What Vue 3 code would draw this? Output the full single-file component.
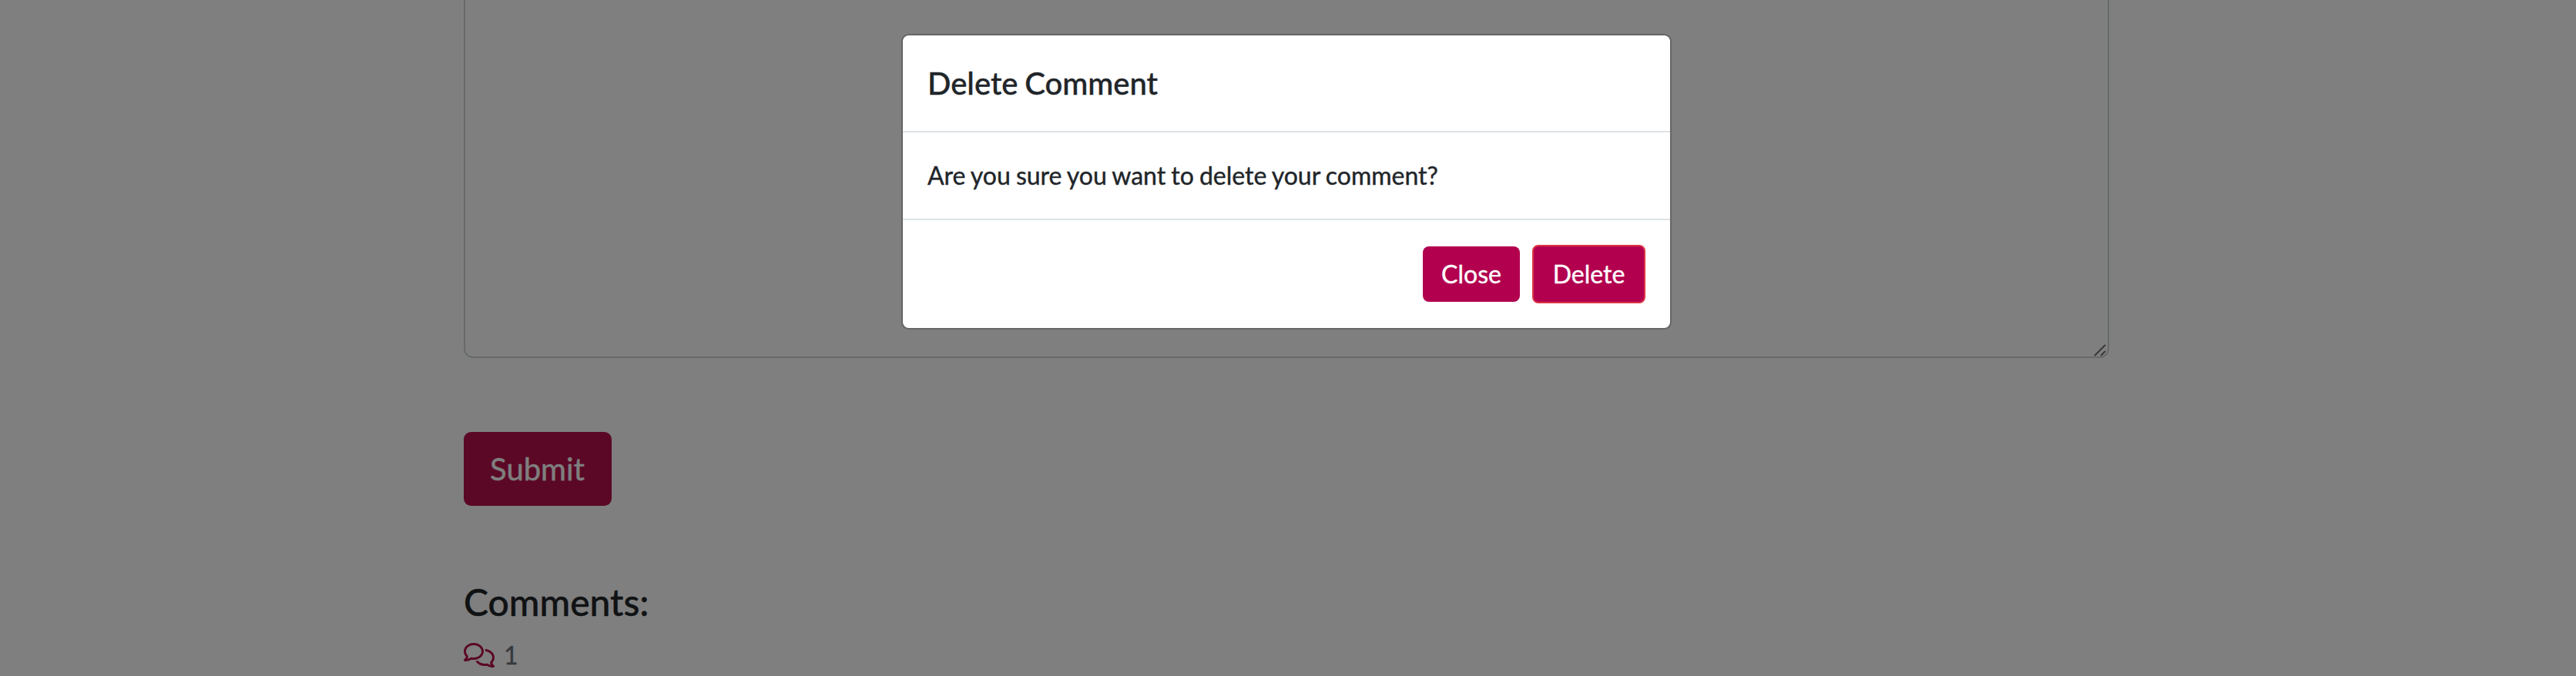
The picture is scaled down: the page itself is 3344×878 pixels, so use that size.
<script setup>
const commentCount = 1
</script>

<template>
  <div class="screen">
    <main class="page">
      <div class="textarea">
        <svg class="grip" width="16" height="16" viewBox="0 0 16 16">
          <path d="M1 15L15 1M9 15L15 9" />
        </svg>
      </div>
      <button class="submit" type="button">Submit</button>
      <h3 class="heading">Comments:</h3>
      <div class="count">
        <svg class="icon" viewBox="0 0 640 512">
          <path d="M88.2 309.1c9.8-18.3 6.8-40.8-7.5-55.8C59.4 230.9 48 204 48 176c0-63.5 63.8-128 160-128s160 64.5 160 128s-63.8 128-160 128c-13.1 0-25.8-1.3-37.8-3.6c-10.4-2-21.2-.6-30.7 4.2c-4.1 2.1-8.3 4.1-12.6 6c-16 7.2-32.9 13.5-49.9 18c2.8-4.6 5.4-9.1 7.9-13.6c1.1-1.9 2.2-3.9 3.2-5.9zM0 176c0 41.8 17.2 80.1 45.9 110.3c-.9 1.7-1.9 3.5-2.8 5.1c-10.3 18.4-22.3 36.5-36.6 52.1c-6.6 7-8.3 17.2-4.6 25.9C5.8 378.3 14.4 384 24 384c43 0 86.5-13.3 122.7-29.7c4.8-2.2 9.6-4.5 14.2-6.8c15.1 3 30.9 4.5 47.1 4.5c114.9 0 208-78.8 208-176S322.9 0 208 0S0 78.8 0 176zM432 480c16.2 0 31.9-1.6 47.1-4.5c4.6 2.3 9.4 4.6 14.2 6.8C529.5 498.7 573 512 616 512c9.6 0 18.2-5.7 22-14.5c3.8-8.8 2-19-4.6-25.9c-14.2-15.6-26.2-33.7-36.6-52.1c-.9-1.7-1.9-3.4-2.8-5.1C622.8 384.1 640 345.8 640 304c0-94.4-87.9-171.5-198.2-175.8c4.1 15.2 6.2 31.2 6.2 47.8l0 .6c87.2 6.7 144 67.5 144 127.4c0 28-11.4 54.9-32.7 77.2c-14.3 15-17.3 37.6-7.5 55.8c1.1 2 2.2 4 3.2 5.9c2.5 4.5 5.2 9 7.9 13.6c-17-4.5-33.9-10.7-49.9-18c-4.3-1.9-8.5-3.9-12.6-6c-9.5-4.8-20.3-6.2-30.7-4.2c-12.1 2.4-24.8 3.6-37.8 3.6c-61.7 0-110-26.5-136.8-62.3c-16 5.4-32.8 9.4-50 11.8C279 439.8 350 480 432 480z" />
        </svg>
        <span>{{ commentCount }}</span>
      </div>
    </main>

    <div class="backdrop">
      <div class="modal" role="dialog">
        <h5 class="modal-header">Delete Comment</h5>
        <div class="modal-body">Are you sure you want to delete your comment?</div>
        <div class="modal-footer">
          <button class="btn close" type="button">Close</button>
          <button class="btn delete" type="button">Delete</button>
        </div>
      </div>
    </div>
  </div>
</template>

<style>
body {
  margin: 0;
  background: #808080;
}
</style>

<style scoped>
.screen {
  position: relative;
  height: 878px;
  overflow: hidden;
  background: #fff;
  color: #212529;
  font: 400 32px/48px Lato, sans-serif;
  -webkit-text-stroke: 0.4px currentColor;
}
.page {
  display: flex;
  flex-direction: column;
  align-items: flex-start;
  width: 2136px;
  margin-left: 602px;
}
.textarea {
  box-sizing: border-box;
  display: flex;
  justify-content: flex-end;
  align-items: flex-end;
  width: 2136px;
  height: 465px;
  padding: 0 2px 0 0;
  border: 2px solid #ced4da;
  border-top: 0;
  border-radius: 0 0 12px 12px;
}
.grip {
  display: block;
  fill: none;
  stroke: #707070;
  stroke-width: 2;
}
button {
  box-sizing: border-box;
  margin: 0;
  padding: 0;
  border: 0;
  font-family: inherit;
  color: #fff;
}
.submit {
  width: 192px;
  height: 96px;
  margin-top: 96px;
  padding-right: 1px;
  border-radius: 9.6px;
  background: #b6104c;
  font-size: 40px;
  line-height: 60px;
}
.heading {
  margin: 96px 0 0;
  font-size: 48px;
  line-height: 57px;
  font-weight: 500;
}
.count {
  display: flex;
  align-items: center;
  gap: 12px;
  margin-top: 17px;
  color: #6c757d;
}
.icon {
  width: 40px;
  height: 32px;
  fill: #b6104c;
}
.backdrop {
  position: absolute;
  inset: 0;
  background: rgba(0, 0, 0, 0.5);
}
.modal {
  box-sizing: border-box;
  width: 1000px;
  margin: 44px 0 0 1170px;
  border: 2px solid rgba(0, 0, 0, 0.2);
  border-radius: 9.6px;
  background: #fff;
  background-clip: padding-box;
}
.modal-header {
  margin: 0;
  padding: 32px;
  border-bottom: 2px solid #dee2e6;
  font-size: 40px;
  line-height: 60px;
  font-weight: 500;
  word-spacing: -1.4px;
}
.modal-body {
  padding: 32px;
  word-spacing: -1.1px;
}
.modal-footer {
  display: flex;
  justify-content: flex-end;
  align-items: center;
  gap: 16px;
  padding: 32px;
  border-top: 2px solid #dee2e6;
}
.btn {
  border-radius: 8px;
  background: #b2004f;
  font-size: 32px;
  line-height: 48px;
}
.close {
  width: 126px;
  height: 72px;
}
.delete {
  width: 147px;
  height: 76px;
  border: 2px solid #dc3545;
}
</style>
